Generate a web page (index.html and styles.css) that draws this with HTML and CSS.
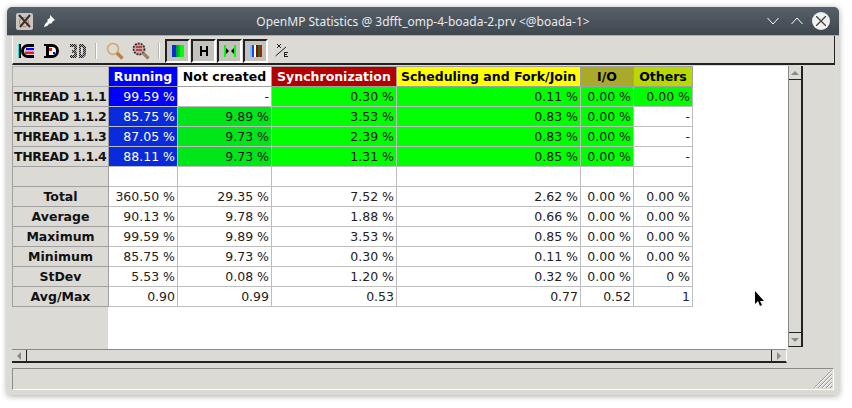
FILE: index.html
```html
<!DOCTYPE html>
<html lang="en">
<head>
    <meta charset="UTF-8">
    <title>OpenMP Statistics</title>
    <link rel="stylesheet" href="styles.css">
</head>
<body>
    <div class="window">
        <div class="titlebar">
            <div class="app-icon">
                <svg width="16" height="16" viewBox="0 0 16 16"><circle cx="7" cy="9" r="4.5" stroke="#d8784a" stroke-width="1.2" fill="none"/><path d="M2 2l11 12M13 2L3 14" stroke="#333" stroke-width="2" fill="none"/></svg>
            </div>
            <svg class="pin" width="12" height="12" viewBox="0 0 12 12"><path d="M7 0l5 5-2 1-2 3-1-1-3 3-3 1 1-3 3-3-1-1 3-2z" fill="#fff"/></svg>
            <div class="title">OpenMP Statistics @ 3dfft_omp-4-boada-2.prv &lt;@boada-1&gt;</div>
            <svg class="win-btn" width="12" height="8" viewBox="0 0 12 8"><path d="M0.5 1l5.5 6 5.5-6" stroke="#fff" fill="none"/></svg>
            <svg class="win-btn" width="12" height="8" viewBox="0 0 12 8"><path d="M0.5 7l5.5-6 5.5 6" stroke="#fff" fill="none"/></svg>
            <div class="close-btn">
                <svg width="10" height="10" viewBox="0 0 10 10"><path d="M0 0l10 10M10 0L0 10" stroke="#444" stroke-width="1.3"/></svg>
            </div>
        </div>

        <div class="toolbar">
            <div class="tool">
                <svg width="16" height="16" viewBox="0 0 16 16"><path d="M0 1h1v14H0z" fill="#0ee"/><path d="M1 1h2v14H1z" fill="#000"/><path d="M16 1h-6a7 7 0 0 0 0 14h6v-3h-6a4 4 0 0 1 0-8h6z" fill="#000"/><path d="M8 5h8v2.500H8z" fill="#10f"/><path d="M8 7.500h8v1H8z" fill="#fff"/><path d="M7 8.500h9V11H7z" fill="#f11"/></svg>
            </div>
            <div class="tool">
                <svg width="16" height="16" viewBox="0 0 16 16"><path d="M0 1h8a7 7 0 0 1 0 14H0v-2h2V3H0z" fill="#000"/><path d="M5 4h3a4 4 0 0 1 0 8H5z" fill="#fff"/><path d="M5 5h3v3H5z" fill="#f11"/><path d="M9 9h2v2H9z" fill="#10f"/></svg>
            </div>
            <div class="tool">
                <svg width="18" height="16" viewBox="0 0 18 16">
                    <defs><pattern id="dither" width="2" height="2" patternUnits="userSpaceOnUse"><path d="M0 0h1v1H0zM1 1h1v1H1z" fill="#222"/><path d="M1 0h1v1H1zM0 1h1v1H0z" fill="#aaa"/></pattern></defs>
                    <path d="M1 1h6l1 2v3l-1 2 1 2v3l-1 2H1v-3h4v-2H3V7h2V4H1zM10 1h4l3 3v8l-3 3h-4zM12 4v8h1l1-1V5l-1-1z" fill="url(#dither)"/>
                </svg>
            </div>
            <div class="sep"></div>
            <div class="tool">
                <svg width="18" height="18" viewBox="0 0 18 18"><circle cx="7" cy="7" r="5.500" fill="none" stroke="#d8a468" stroke-width="1.500"/><path d="M11 11l5.500 5.500" stroke="#b88048" stroke-width="3.200"/></svg>
            </div>
            <div class="tool">
                <svg width="18" height="18" viewBox="0 0 18 18"><circle cx="7" cy="7" r="5.500" fill="#c8a8a8" stroke="#333" stroke-width="1.800" stroke-dasharray="2 1"/><path d="M4 5h6M4 8h6" stroke="#c02020" stroke-width="1.500"/><path d="M11 11l5.500 5.500" stroke="#a08070" stroke-width="3.200"/></svg>
            </div>
            <div class="sep"></div>
            <div class="tool toggle">
                <svg width="12" height="12" viewBox="0 0 12 12"><path d="M0 0h4v12H0z" fill="#0a2fd0"/><path d="M4 0h2v12H4z" fill="#00a040"/><path d="M6 0h2v12H6z" fill="#00c030"/><path d="M8 0h4v12H8z" fill="#00ff00"/></svg>
            </div>
            <div class="tool toggle">
                <svg width="10" height="10" viewBox="0 0 10 10"><path d="M1 0h2v10H1zM7 0h2v10H7zM3 4h4v2H3z" fill="#000"/></svg>
            </div>
            <div class="tool toggle">
                <svg width="12" height="12" viewBox="0 0 12 12"><path d="M0 0h2v12H0zM10 0h2v12h-2z" fill="#00ff00"/><path d="M2 3l3 3-3 3zM10 3L7 6l3 3z" fill="#000"/></svg>
            </div>
            <div class="tool toggle">
                <svg width="12" height="12" viewBox="0 0 12 12"><path d="M0 0h2v12H0z" fill="#70c0ff"/><path d="M2 0h2v12H2z" fill="#2040f0"/><path d="M4 0h2v12H4z" fill="#fff"/><path d="M6 0h2v12H6z" fill="#a00000"/><path d="M8 0h2v12H8z" fill="#008000"/><path d="M10 0h2v12h-2z" fill="#a02020"/></svg>
            </div>
            <div class="tool">
                <svg width="14" height="16" viewBox="0 0 14 16"><path d="M0.500 13L11 4" stroke="#222"/><path d="M2 1h1v1H2zM5 1h1v1H5zM3 2h2v2H3zM2 4h1v1H2zM5 4h1v1H5zM9 9h4v1h-4zM9 11h3v1H9zM9 13h4v1H9zM9 10h1v4H9z" fill="#222"/></svg>
            </div>
        </div>

        <div class="content">
            <div class="grid-area">
                <div class="grid-inner">
                    <table class="stats">
                        <colgroup>
                            <col class="c0"><col class="c1"><col class="c2"><col class="c3"><col class="c4"><col class="c5"><col class="c6">
                        </colgroup>
                        <tr>
                            <th class="corner"></th>
                            <th class="h-run">Running</th>
                            <th class="h-not">Not created</th>
                            <th class="h-sync">Synchronization</th>
                            <th class="h-sched">Scheduling and Fork/Join</th>
                            <th class="h-io">I/O</th>
                            <th class="h-oth">Others</th>
                        </tr>
                        <tr>
                            <th class="thread">THREAD 1.1.1</th>
                            <td class="blue1">99.59 %</td><td>-</td><td class="green">0.30 %</td><td class="green">0.11 %</td><td class="green">0.00 %</td><td class="green">0.00 %</td>
                        </tr>
                        <tr>
                            <th class="thread">THREAD 1.1.2</th>
                            <td class="blue2">85.75 %</td><td class="green2">9.89 %</td><td class="green">3.53 %</td><td class="green">0.83 %</td><td class="green">0.00 %</td><td>-</td>
                        </tr>
                        <tr>
                            <th class="thread">THREAD 1.1.3</th>
                            <td class="blue2">87.05 %</td><td class="green2">9.73 %</td><td class="green">2.39 %</td><td class="green">0.83 %</td><td class="green">0.00 %</td><td>-</td>
                        </tr>
                        <tr>
                            <th class="thread">THREAD 1.1.4</th>
                            <td class="blue2">88.11 %</td><td class="green2">9.73 %</td><td class="green">1.31 %</td><td class="green">0.85 %</td><td class="green">0.00 %</td><td>-</td>
                        </tr>
                        <tr class="blank"><th></th><td></td><td></td><td></td><td></td><td></td><td></td></tr>
                        <tr><th class="center">Total</th><td>360.50 %</td><td>29.35 %</td><td>7.52 %</td><td>2.62 %</td><td>0.00 %</td><td>0.00 %</td></tr>
                        <tr><th class="center">Average</th><td>90.13 %</td><td>9.78 %</td><td>1.88 %</td><td>0.66 %</td><td>0.00 %</td><td>0.00 %</td></tr>
                        <tr><th class="center">Maximum</th><td>99.59 %</td><td>9.89 %</td><td>3.53 %</td><td>0.85 %</td><td>0.00 %</td><td>0.00 %</td></tr>
                        <tr><th class="center">Minimum</th><td>85.75 %</td><td>9.73 %</td><td>0.30 %</td><td>0.11 %</td><td>0.00 %</td><td>0.00 %</td></tr>
                        <tr><th class="center">StDev</th><td>5.53 %</td><td>0.08 %</td><td>1.20 %</td><td>0.32 %</td><td>0.00 %</td><td>0 %</td></tr>
                        <tr><th class="center">Avg/Max</th><td>0.90</td><td>0.99</td><td>0.53</td><td>0.77</td><td>0.52</td><td>1</td></tr>
                    </table>
                    <svg class="cursor" width="12" height="18" viewBox="0 0 12 18"><path d="M1 1v13l3-3 2 5 2-1-2-4h4z" fill="#000"/></svg>
                </div>
                <div class="vscroll">
                    <div class="arrow-box"><span class="tri-up"></span></div>
                    <div class="vtrack"></div>
                    <div class="arrow-box"><span class="tri-down"></span></div>
                </div>
                <div class="hscroll">
                    <div class="arrow-box"><span class="tri-left"></span></div>
                    <div class="htrack"></div>
                    <div class="arrow-box"><span class="tri-right"></span></div>
                </div>
            </div>
        </div>

        <div class="statusbar">
            <svg class="grip" width="22" height="22" viewBox="0 0 22 22"><path d="M21 3L3 21M21 7L7 21M21 11L11 21M21 15L15 21M21 19L19 21" stroke="#9a9a94"/><path d="M21 4L4 21M21 8L8 21M21 12L12 21M21 16L16 21" stroke="#fff"/></svg>
        </div>
    </div>
</body>
</html>
```

FILE: styles.css
```css
* {
    box-sizing: border-box;
}

html, body {
    margin: 0;
    padding: 0;
    background: #fff;
}

body {
    width: 852px;
    height: 408px;
    padding: 7px 13px 13px 7px;
    overflow: hidden;
    font-family: "DejaVu Sans", sans-serif;
}

.window {
    width: 832px;
    height: 388px;
    background: #dcdad5;
    border-radius: 5px 5px 2px 2px;
    box-shadow: 0 1px 6px rgba(0, 0, 0, 0.35);
    display: flex;
    flex-direction: column;
    overflow: hidden;
}

.titlebar {
    height: 29px;
    flex: none;
    background: linear-gradient(#576069, #3f474e);
    border-bottom: 1px solid #7fb8de;
    display: flex;
    align-items: center;
    padding: 0 9px 0 9px;
    color: #e8eaec;
}

.app-icon {
    width: 17px;
    height: 17px;
    background: #c8c6c0;
    border-radius: 2px;
    display: flex;
    align-items: center;
    justify-content: center;
}

.pin {
    margin-left: 10px;
}

.title {
    flex: 1;
    padding-left: 24px;
    text-align: center;
    font-size: 12px;
    font-family: "Noto Sans", sans-serif;
}

.win-btn {
    margin-right: 12px;
}

.close-btn {
    width: 18px;
    height: 18px;
    margin-left: -3px;
    border-radius: 50%;
    background: #f0f0f0;
    display: flex;
    align-items: center;
    justify-content: center;
}

.toolbar {
    height: 29px;
    flex: none;
    margin: 0 4px 0 5px;
    padding: 2px 0 0 0;
    border-left: 1px solid #fff;
    border-right: 1px solid #222;
    border-bottom: 2px solid #222;
    display: flex;
    align-items: center;
    gap: 1px;
}

.tool {
    width: 25px;
    height: 24px;
    display: flex;
    align-items: center;
    justify-content: center;
}

.toggle {
    background: #c4c2bd;
    border: 2px solid;
    border-color: #222 #fff #fff #222;
}

.sep {
    width: 2px;
    height: 16px;
    margin: 0 4px;
    background: #b8b6b0;
    border-right: 1px solid #fff;
}

.content {
    flex: 1;
    padding: 0 0 0 5px;
}

.grid-area {
    display: grid;
    grid-template-columns: 776px 15px;
    grid-template-rows: 283px 14px;
    padding-top: 1px;
}

.grid-inner {
    background: #fff;
    position: relative;
    overflow: hidden;
}

.grid-inner::before {
    content: "";
    position: absolute;
    left: 0;
    top: 0;
    bottom: 0;
    width: 96px;
    background: #dcdad5;
}

.stats {
    position: relative;
    border-collapse: collapse;
    table-layout: fixed;
    width: 680px;
    font-size: 12.5px;
}

.c0 { width: 96px; }
.c1 { width: 69px; }
.c2 { width: 94px; }
.c3 { width: 125px; }
.c4 { width: 184px; }
.c5 { width: 53px; }
.c6 { width: 59px; }

.stats tr {
    height: 20px;
}

.stats th, .stats td {
    padding: 0 2px;
    border: 1px solid #bdbdbd;
    white-space: nowrap;
    line-height: 18px;
}

.stats th {
    background: #dcdad5;
    border-color: #a0a0a0;
    color: #111;
    text-align: left;
}

.stats td {
    background: #fff;
    color: #222;
    text-align: right;
}

.stats th.center {
    text-align: center;
}

.stats th.thread {
    padding: 0 1px;
    letter-spacing: -0.4px;
}

.stats .corner {
    border-color: #b0b0b0;
}

.stats th.h-run { background: #0000ff; color: #fff; text-align: center; }
.stats th.h-not { background: #fff; color: #000; text-align: center; }
.stats th.h-sync { background: #b30000; color: #fff; text-align: center; }
.stats th.h-sched { background: #ffff00; color: #000; text-align: center; }
.stats th.h-io { background: #aaaa2a; color: #000; text-align: center; }
.stats th.h-oth { background: #b8d800; color: #000; text-align: center; }

.stats td.blue1 { background: #0000ff; color: #fff; }
.stats td.blue2 { background: #0a2bdc; color: #fff; }
.stats td.green { background: #00ff00; color: #111; }
.stats td.green2 { background: #00e619; color: #111; }

.cursor {
    position: absolute;
    left: 742px;
    top: 224px;
}

.vscroll {
    display: flex;
    flex-direction: column;
    height: 281px;
    border-left: 1px solid #888;
    border-right: 2px solid #222;
    border-bottom: 1px solid #222;
}

.vtrack, .htrack {
    flex: 1;
    background: #dcdad5;
}

.vtrack {
    border-top: 1px solid #222;
    border-bottom: 1px solid #222;
}

.hscroll {
    display: flex;
    grid-column: 1;
    width: 775px;
    border-top: 1px solid #888;
    border-bottom: 2px solid #222;
    border-right: 1px solid #fff;
}

.htrack {
    border-left: 1px solid #222;
    border-right: 1px solid #222;
}

.arrow-box {
    width: 12px;
    height: 13px;
    flex: none;
    display: flex;
    align-items: center;
    justify-content: center;
}

.hscroll .arrow-box {
    width: 14px;
    height: 11px;
}

.tri-up, .tri-down, .tri-left, .tri-right {
    width: 0;
    height: 0;
    border: 4px solid transparent;
}

.tri-up { border-bottom-color: #8a8a86; border-top: 0; }
.tri-down { border-top-color: #8a8a86; border-bottom: 0; }
.tri-left { border-right-color: #8a8a86; border-left: 0; }
.tri-right { border-left-color: #8a8a86; border-right: 0; }

.statusbar {
    height: 22px;
    flex: none;
    margin: 0 5px 5px 5px;
    border: 1px solid;
    border-color: #8c8c88 #fff #fff #8c8c88;
    position: relative;
}

.grip {
    position: absolute;
    right: 0;
    bottom: 0;
}
```
